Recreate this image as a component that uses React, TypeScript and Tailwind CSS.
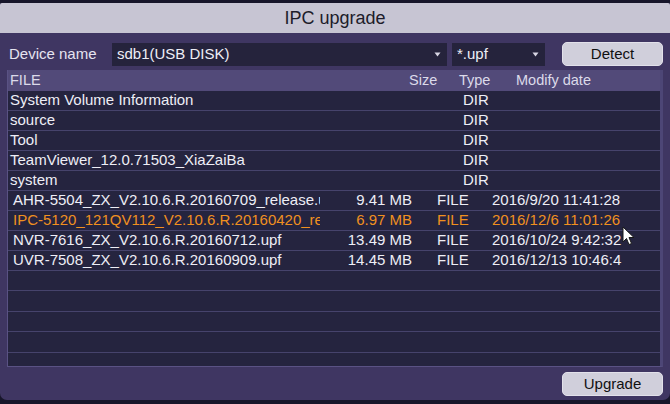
import React from 'react';

const dirs = ['System Volume Information', 'source', 'Tool', 'TeamViewer_12.0.71503_XiaZaiBa', 'system'];

const files = [
  { name: 'AHR-5504_ZX_V2.10.6.R.20160709_release.upf', size: '9.41 MB', date: '2016/9/20 11:41:28' },
  { name: 'IPC-5120_121QV112_V2.10.6.R.20160420_release.upf', size: '6.97 MB', date: '2016/12/6 11:01:26', active: true },
  { name: 'NVR-7616_ZX_V2.10.6.R.20160712.upf', size: '13.49 MB', date: '2016/10/24 9:42:32' },
  { name: 'UVR-7508_ZX_V2.10.6.R.20160909.upf', size: '14.45 MB', date: '2016/12/13 10:46:4' },
];

const Caret = () => (
  <svg width="7" height="5" viewBox="0 0 7 5" className="shrink-0">
    <path d="M0.5 0.5 L6.5 0.5 L3.5 4.5 Z" fill="#d8d6e4" />
  </svg>
);

export default function App() {
  return (
    <div className="w-[670px] h-[404px] bg-[#17162a] pt-[3px] pb-[4px] font-['Liberation_Sans',Arial,sans-serif] text-[14.5px] overflow-hidden">
      <div className="relative h-full flex flex-col bg-[#3f3662] rounded-t-[2px] rounded-b-[7px] overflow-hidden">
        {/* title */}
        <div className="h-[30px] shrink-0 bg-[#c7c5d3] flex items-center justify-center text-[18px] text-[#1d1c2a]">
          IPC upgrade
        </div>

        {/* device row */}
        <div className="flex items-center h-[24px] mt-[9px] shrink-0">
          <span className="w-[112px] pl-[9px] text-[15px] text-[#e6e4f0]">Device name</span>
          <div className="w-[335px] h-[23px] bg-[#25233c] flex items-center pl-[5px] pr-[6px] text-[15px] text-[#eeeef6]">
            <span className="flex-1">sdb1(USB DISK)</span>
            <Caret />
          </div>
          <div className="ml-[5px] w-[93px] h-[23px] bg-[#25233c] flex items-center pl-[5px] pr-[6px] text-[15px] text-[#eeeef6]">
            <span className="flex-1">*.upf</span>
            <Caret />
          </div>
          <button className="ml-[17px] w-[101px] h-[24px] bg-[#d0cfdb] rounded-[5px] border border-[#e2e1ea] text-[#111] text-[15px] flex items-center justify-center">
            Detect
          </button>
        </div>

        {/* table */}
        <div className="ml-[7px] mt-[4px] w-[656px] h-[297px] shrink-0 border-l border-b border-[#5a5284] border-r-[3px] border-r-[#4d4676] bg-[#25243f] overflow-hidden">
          <div className="h-[21px] bg-[#524a79] flex items-center text-[#dcdaea]">
            <span className="w-[401px] pl-[2px]">FILE</span>
            <span className="w-[50px]">Size</span>
            <span className="w-[57px]">Type</span>
            <span>Modify date</span>
          </div>
          {dirs.map((d) => (
            <div key={d} className="h-[20px] flex items-center border-b border-[#46436c] text-[15px] text-[#eeeef6]">
              <span className="w-[455px] pl-[2px] whitespace-nowrap">{d}</span>
              <span>DIR</span>
            </div>
          ))}
          {files.map((f) => (
            <div
              key={f.name}
              className={`h-[20px] flex items-center border-b border-[#46436c] text-[15px] ${f.active ? 'text-[#f0901f]' : 'text-[#eeeef6]'}`}
            >
              <span className="w-[312px] pl-[5px] whitespace-nowrap overflow-hidden">{f.name}</span>
              <span className="w-[92px] text-right whitespace-nowrap">{f.size}</span>
              <span className="ml-[25px] w-[55px]">FILE</span>
              <span className="whitespace-nowrap">{f.date}</span>
            </div>
          ))}
          {[0, 1, 2, 3, 4].map((i) => (
            <div key={i} className="h-[20.4px] border-b border-[#46436c]" />
          ))}
        </div>

        {/* footer */}
        <div className="flex justify-end mt-[5px] pr-[7px]">
          <button className="w-[101px] h-[24px] bg-[#d0cfdb] rounded-[5px] border border-[#e2e1ea] text-[#111] text-[15px] flex items-center justify-center">
            Upgrade
          </button>
        </div>

        {/* mouse pointer */}
        <svg className="absolute left-[622px] top-[223px]" width="13" height="20" viewBox="0 0 13 20">
          <path d="M1 1 L1 16 L4.5 12.5 L7 18.5 L9.5 17.5 L7 11.5 L12 11.5 Z" fill="#ffffff" stroke="#1a1a1a" strokeWidth="1" />
        </svg>
      </div>
    </div>
  );
}
